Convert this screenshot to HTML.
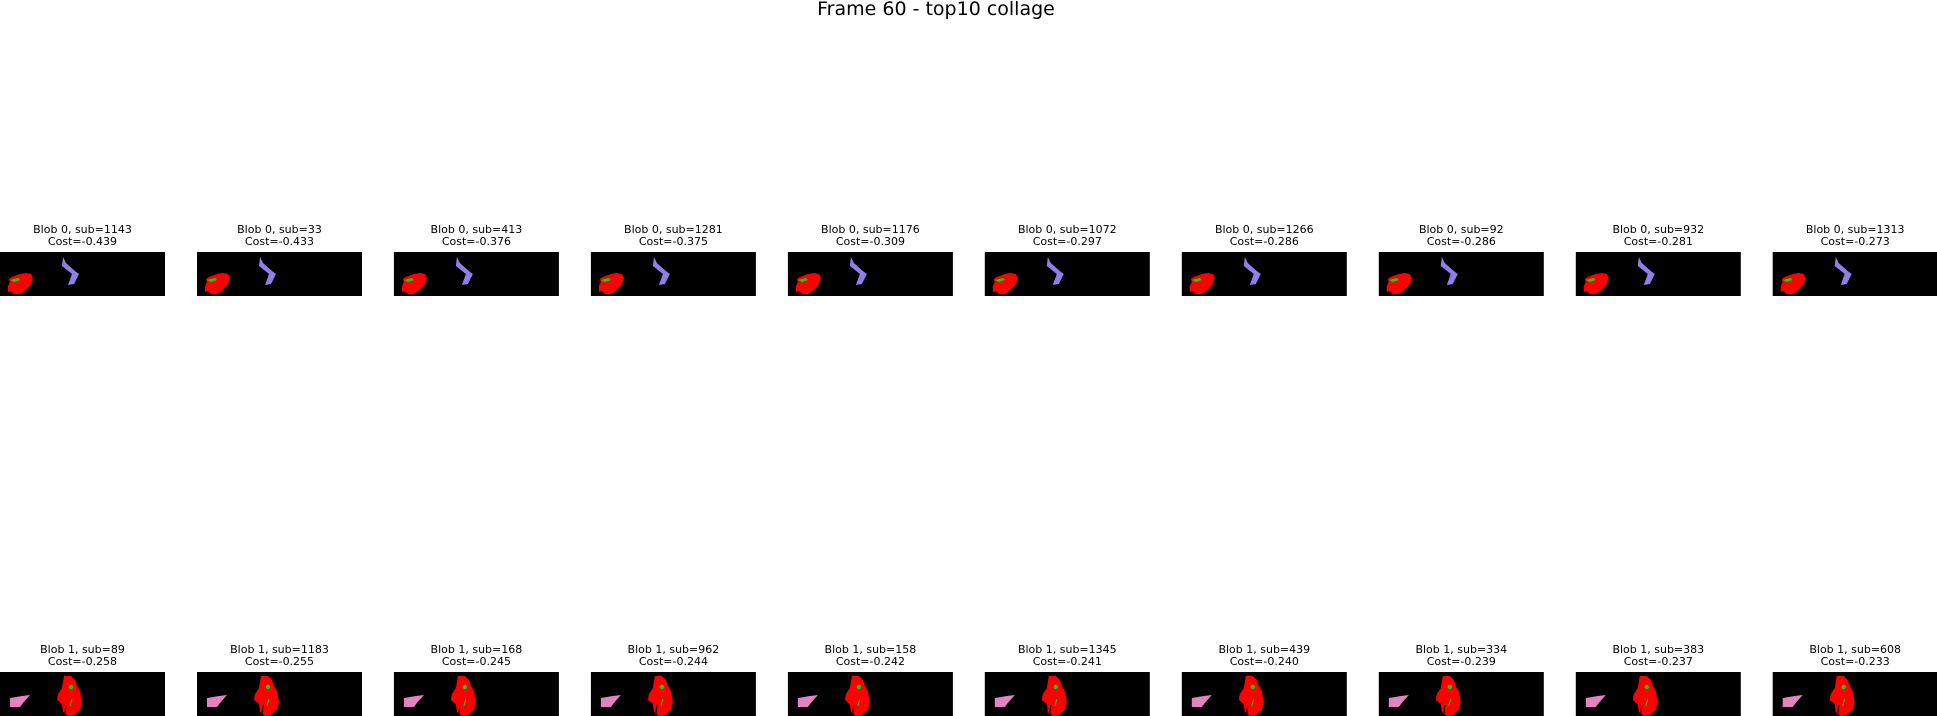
<!DOCTYPE html>
<html><head><meta charset="utf-8"><style>
html,body{margin:0;padding:0;background:#fff;width:1937px;height:716px;overflow:hidden}
svg{display:block}
text{font-family:"DejaVu Sans","Liberation Sans",sans-serif;fill:#000}
</style></head><body>
<svg width="1937" height="716" viewBox="0 0 1937 716" xmlns="http://www.w3.org/2000/svg">
<defs>
<g id="top">
<rect x="0" y="0" width="165" height="44" fill="#000"/>
<path d="M12 25 L20 22 L26 21 L31 22 L33 26 L31 32 L26 38 L20 42 L14 42 L11 39 L8 40 L8 34 L10 30 L9 27 Z" fill="#f00"/>
<path d="M10 28 L18 26 L20 28 L14 30 Z" fill="#0d0"/>
<path d="M63 5 L66 11 L75 19 L79 22 L74 32 L68 33 L72 22 L62 14 Z" fill="#8f7fe8"/>
</g>
<g id="bot">
<rect x="0" y="0" width="165" height="44" fill="#000"/>
<path d="M10 26 L22 24 L30 23 L23 31 L20 35 L10 35 Z" fill="#e383c0"/>
<path d="M64 4 L71 4 L75 8 L77 14 L80 19 L82 30 L80 38 L74 43 L68 44 L63 40 L62 32 L57 28 L58 22 L62 16 Z" fill="#f00"/>
<circle cx="71" cy="15" r="2.2" fill="#0d0"/>
<path d="M72 27 L70 34" stroke="#0d0" stroke-width="1"/>
<path d="M66 33 L65 42" stroke="#000" stroke-width="1.2"/>
</g>
</defs>
<text x="936" y="15" font-size="19" text-anchor="middle">Frame 60 - top10 collage</text>
<g font-size="11" text-anchor="middle">
<g transform="translate(0,0)"><text x="82.5" y="233">Blob 0, sub=1143</text><text x="82.5" y="245">Cost=-0.439</text><use href="#top" y="252"/><text x="82.5" y="653">Blob 1, sub=89</text><text x="82.5" y="665">Cost=-0.258</text><use href="#bot" y="672"/></g>
<g transform="translate(197,0)"><text x="82.5" y="233">Blob 0, sub=33</text><text x="82.5" y="245">Cost=-0.433</text><use href="#top" y="252"/><text x="82.5" y="653">Blob 1, sub=1183</text><text x="82.5" y="665">Cost=-0.255</text><use href="#bot" y="672"/></g>
<g transform="translate(393.9,0)"><text x="82.5" y="233">Blob 0, sub=413</text><text x="82.5" y="245">Cost=-0.376</text><use href="#top" y="252"/><text x="82.5" y="653">Blob 1, sub=168</text><text x="82.5" y="665">Cost=-0.245</text><use href="#bot" y="672"/></g>
<g transform="translate(590.9,0)"><text x="82.5" y="233">Blob 0, sub=1281</text><text x="82.5" y="245">Cost=-0.375</text><use href="#top" y="252"/><text x="82.5" y="653">Blob 1, sub=962</text><text x="82.5" y="665">Cost=-0.244</text><use href="#bot" y="672"/></g>
<g transform="translate(787.9,0)"><text x="82.5" y="233">Blob 0, sub=1176</text><text x="82.5" y="245">Cost=-0.309</text><use href="#top" y="252"/><text x="82.5" y="653">Blob 1, sub=158</text><text x="82.5" y="665">Cost=-0.242</text><use href="#bot" y="672"/></g>
<g transform="translate(984.8,0)"><text x="82.5" y="233">Blob 0, sub=1072</text><text x="82.5" y="245">Cost=-0.297</text><use href="#top" y="252"/><text x="82.5" y="653">Blob 1, sub=1345</text><text x="82.5" y="665">Cost=-0.241</text><use href="#bot" y="672"/></g>
<g transform="translate(1181.8,0)"><text x="82.5" y="233">Blob 0, sub=1266</text><text x="82.5" y="245">Cost=-0.286</text><use href="#top" y="252"/><text x="82.5" y="653">Blob 1, sub=439</text><text x="82.5" y="665">Cost=-0.240</text><use href="#bot" y="672"/></g>
<g transform="translate(1378.8,0)"><text x="82.5" y="233">Blob 0, sub=92</text><text x="82.5" y="245">Cost=-0.286</text><use href="#top" y="252"/><text x="82.5" y="653">Blob 1, sub=334</text><text x="82.5" y="665">Cost=-0.239</text><use href="#bot" y="672"/></g>
<g transform="translate(1575.8,0)"><text x="82.5" y="233">Blob 0, sub=932</text><text x="82.5" y="245">Cost=-0.281</text><use href="#top" y="252"/><text x="82.5" y="653">Blob 1, sub=383</text><text x="82.5" y="665">Cost=-0.237</text><use href="#bot" y="672"/></g>
<g transform="translate(1772.7,0)"><text x="82.5" y="233">Blob 0, sub=1313</text><text x="82.5" y="245">Cost=-0.273</text><use href="#top" y="252"/><text x="82.5" y="653">Blob 1, sub=608</text><text x="82.5" y="665">Cost=-0.233</text><use href="#bot" y="672"/></g>
</g>
</svg>
</body></html>
